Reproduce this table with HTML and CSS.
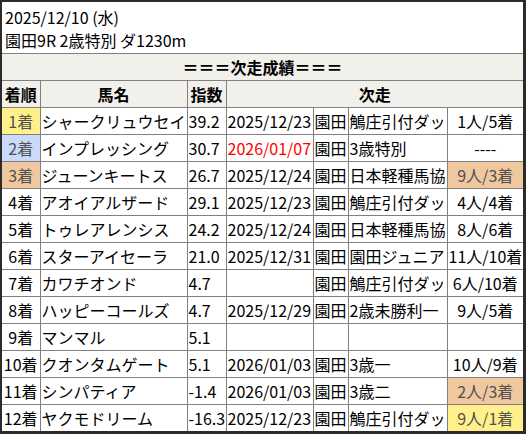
FILE: index.html
```html
<!DOCTYPE html>
<html lang="ja">
<head>
<meta charset="utf-8">
<title>次走成績</title>
<link rel="stylesheet" href="styles.css">
</head>
<body>
<div class="frame">
  <div class="info">
    <div>2025/12/10 (水)</div>
    <div>園田9R 2歳特別 ダ1230m</div>
  </div>
  <table class="grid">
    <colgroup>
      <col class="c-rank"><col class="c-name"><col class="c-idx"><col class="c-date"><col class="c-course"><col class="c-race"><col class="c-res">
    </colgroup>
    <tr class="head"><td colspan="7" class="title">＝＝＝次走成績＝＝＝</td></tr>
    <tr class="head">
      <td class="ctr">着順</td><td class="ctr">馬名</td><td class="ctr">指数</td><td colspan="4" class="ctr">次走</td>
    </tr>
    <tr><td class="ctr p1">1着</td><td>シャークリュウセイ</td><td>39.2</td><td>2025/12/23</td><td>園田</td><td>鵤庄引付ダッ</td><td class="ctr">1人/5着</td></tr>
    <tr><td class="ctr p2">2着</td><td>インプレッシング</td><td>30.7</td><td class="red">2026/01/07</td><td>園田</td><td>3歳特別</td><td class="ctr">----</td></tr>
    <tr><td class="ctr p3">3着</td><td>ジューンキートス</td><td>26.7</td><td>2025/12/24</td><td>園田</td><td>日本軽種馬協</td><td class="ctr p3">9人/3着</td></tr>
    <tr><td class="ctr">4着</td><td>アオイアルザード</td><td>29.1</td><td>2025/12/23</td><td>園田</td><td>鵤庄引付ダッ</td><td class="ctr">4人/4着</td></tr>
    <tr><td class="ctr">5着</td><td>トゥレアレンシス</td><td>24.2</td><td>2025/12/24</td><td>園田</td><td>日本軽種馬協</td><td class="ctr">8人/6着</td></tr>
    <tr><td class="ctr">6着</td><td>スターアイセーラ</td><td>21.0</td><td>2025/12/31</td><td>園田</td><td>園田ジュニア</td><td class="ctr">11人/10着</td></tr>
    <tr><td class="ctr">7着</td><td>カワチオンド</td><td>4.7</td><td></td><td>園田</td><td>鵤庄引付ダッ</td><td class="ctr">6人/10着</td></tr>
    <tr><td class="ctr">8着</td><td>ハッピーコールズ</td><td>4.7</td><td>2025/12/29</td><td>園田</td><td>2歳未勝利一</td><td class="ctr">9人/5着</td></tr>
    <tr><td class="ctr">9着</td><td>マンマル</td><td>5.1</td><td></td><td></td><td></td><td></td></tr>
    <tr><td class="ctr">10着</td><td>クオンタムゲート</td><td>5.1</td><td>2026/01/03</td><td>園田</td><td>3歳一</td><td class="ctr">10人/9着</td></tr>
    <tr><td class="ctr">11着</td><td>シンパティア</td><td>-1.4</td><td>2026/01/03</td><td>園田</td><td>3歳二</td><td class="ctr p3">2人/3着</td></tr>
    <tr><td class="ctr">12着</td><td>ヤクモドリーム</td><td>-16.3</td><td>2025/12/23</td><td>園田</td><td>鵤庄引付ダッ</td><td class="ctr p1">9人/1着</td></tr>
  </table>
</div>
</body>
</html>
```

FILE: styles.css
```css
html, body {
  margin: 0;
  padding: 0;
  background: #ffffff;
}
body {
  font-family: "Noto Sans CJK JP", "Noto Sans", sans-serif;
  font-size: 16px;
  color: #000;
}
.frame {
  width: 526px;
  height: 434px;
  box-sizing: border-box;
  border-style: solid;
  border-color: #2b2b2b;
  border-width: 2px 3px 3px 2px;
  background: #fff;
  overflow: hidden;
}
.info {
  box-sizing: border-box;
  height: 52px;
  padding: 4px 0 0 3px;
  line-height: 23px;
  border-bottom: 1px solid #808080;
}
.grid {
  width: 521px;
  border-collapse: collapse;
  table-layout: fixed;
  border-style: hidden;
}
.c-rank { width: 38px; }
.c-name { width: 147px; }
.c-idx { width: 39px; }
.c-date { width: 87px; }
.c-course { width: 35px; }
.c-race { width: 99px; }
.c-res { width: 76px; }
.grid td {
  border: 1px solid #808080;
  height: 26px;
  padding: 0 1px;
  line-height: 26px;
  white-space: nowrap;
  overflow: hidden;
}
.head td {
  background: #f1f0eb;
  font-weight: bold;
}
.title { text-align: center; }
.ctr { text-align: center; }
.p1 { background: #fff08c; color: #505050; }
.p2 { background: #c9dafa; color: #505050; }
.p3 { background: #f0c8a0; color: #505050; }
.red { color: #ff0000; }
```
